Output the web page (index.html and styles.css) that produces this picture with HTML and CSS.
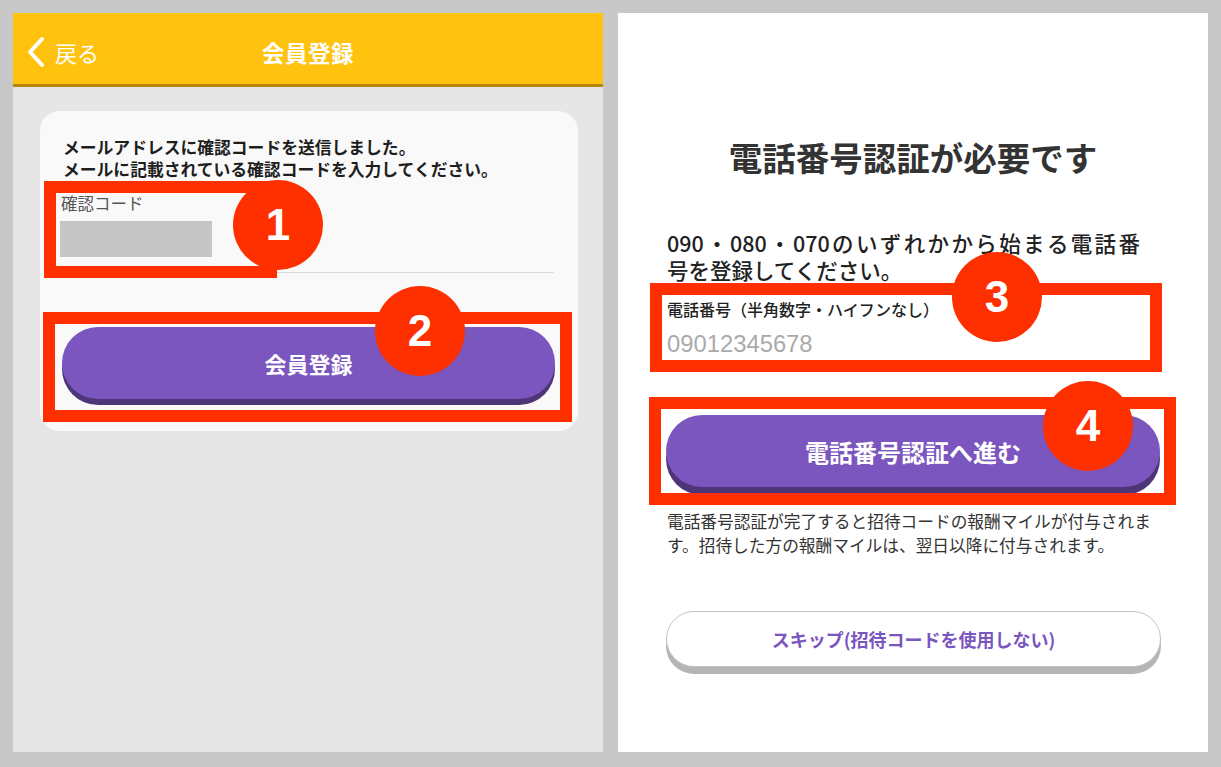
FILE: index.html
```html
<!DOCTYPE html>
<html lang="ja">
<head>
<meta charset="utf-8">
<title>会員登録</title>
<link rel="stylesheet" href="styles.css">
</head>
<body>
<div class="screens">
  <section class="panel panel-left">
    <header class="appbar">
      <a class="back">
        <svg class="chev" width="20" height="32" viewBox="0 0 20 32"><polyline points="16,3 4,16 16,29" fill="none" stroke="#fff" stroke-width="4" stroke-linecap="round" stroke-linejoin="round"/></svg>
        <span>戻る</span>
      </a>
      <h1 class="appbar-title">会員登録</h1>
      <span></span>
    </header>
    <div class="left-body">
      <div class="card">
        <p class="card-msg">メールアドレスに確認コードを送信しました。<br>メールに記載されている確認コードを入力してください。</p>
        <div class="field">
          <label class="field-label">確認コード</label>
          <div class="code-box"></div>
        </div>
        <button class="btn-primary btn-left">会員登録</button>
      </div>
    </div>
    <div class="mark mark-box box1"></div>
    <div class="mark mark-circle c1">1</div>
    <div class="mark mark-box box2"></div>
    <div class="mark mark-circle c2">2</div>
  </section>

  <section class="panel panel-right">
    <h2 class="r-title">電話番号認証が必要です</h2>
    <p class="r-lead"><span class="lead-line">090・080・070のいずれかから始まる電話番</span>号を登録してください。</p>
    <label class="r-label">電話番号（半角数字・ハイフンなし）</label>
    <div class="r-input">09012345678</div>
    <button class="btn-primary btn-right">電話番号認証へ進む</button>
    <p class="r-note">電話番号認証が完了すると招待コードの報酬マイルが付与されま<br>す。招待した方の報酬マイルは、翌日以降に付与されます。</p>
    <button class="btn-skip">スキップ(招待コードを使用しない)</button>
    <div class="mark mark-box box3"></div>
    <div class="mark mark-circle c3">3</div>
    <div class="mark mark-box box4"></div>
    <div class="mark mark-circle c4">4</div>
  </section>
</div>
</body>
</html>
```

FILE: styles.css
```css
* { box-sizing: border-box; }
html, body { margin: 0; padding: 0; }
body {
  background: #c8c8c8;
  font-family: "Noto Sans CJK JP", "Noto Sans", sans-serif;
  width: 1221px;
  height: 767px;
  overflow: hidden;
}
.screens {
  display: flex;
  gap: 15px;
  padding: 13px;
}
.panel {
  position: relative;
  width: 590px;
  height: 739px;
  flex: none;
}
.panel-left {
  background: #e6e6e6;
  display: flex;
  flex-direction: column;
}
.appbar {
  height: 74px;
  background: #ffc20e;
  border-bottom: 3px solid #b8860b;
  display: grid;
  grid-template-columns: 1fr auto 1fr;
  align-items: center;
  padding: 6px 0 0 0;
  color: #fff;
}
.back {
  display: flex;
  align-items: center;
  gap: 9px;
  padding-left: 13px;
  font-size: 22px;
  line-height: 30px;
  color: #fff;
}
.chev { display: block; }
.appbar-title {
  margin: 0;
  font-size: 22.5px;
  font-weight: 700;
  line-height: 30px;
  letter-spacing: 0.5px;
}
.left-body {
  padding: 24px 25px 0 27px;
}
.card {
  background: #f9f9f9;
  border-radius: 20px;
  height: 320px;
  padding: 25px 24px 0 21px;
  display: flex;
  flex-direction: column;
}
.card-msg {
  margin: 0 0 0 2px;
  font-size: 16.8px;
  font-weight: 700;
  line-height: 22px;
  color: #1e1e1e;
  white-space: nowrap;
}
.field {
  margin-top: 13px;
  border-bottom: 1px solid #d8d8e0;
  padding-bottom: 15px;
  display: flex;
  flex-direction: column;
  gap: 8px;
}
.field-label {
  font-size: 16.5px;
  line-height: 20px;
  color: #555;
}
.code-box {
  width: 152px;
  height: 36px;
  background: #c6c6c6;
  margin-left: -1px;
}
.btn-primary {
  display: block;
  border: 0;
  border-radius: 40px;
  background: #7b56bf;
  color: #fff;
  font-family: inherit;
  font-weight: 700;
  text-align: center;
  padding: 0;
}
.btn-left {
  margin: 54px 0 0 1px;
  width: 493px;
  height: 72px;
  font-size: 22px;
  box-shadow: 0 6px 0 #4e3577;
}
.panel-right {
  background: #fff;
  padding: 124px 48px 0 48px;
}
.r-title {
  margin: 0;
  text-align: center;
  font-size: 33.5px;
  line-height: 40px;
  font-weight: 700;
  color: #333;
}
.r-lead {
  margin: 52px 0 0 1px;
  width: 473px;
  font-size: 21.5px;
  line-height: 27px;
  font-weight: 500;
  color: #222;
  white-space: nowrap;
}
.lead-line {
  display: block;
  text-align: justify;
  text-align-last: justify;
  text-justify: inter-character;
}
.r-label {
  display: block;
  margin: 15px 0 0 1px;
  font-size: 16px;
  line-height: 22px;
  font-weight: 500;
  color: #222;
}
.r-input {
  margin: 9px 0 0 1px;
  font-family: "Liberation Sans", Arial, sans-serif;
  font-size: 23.8px;
  line-height: 30px;
  color: #aaa;
}
.btn-right {
  margin-top: 56px;
  width: 494px;
  height: 72px;
  font-size: 24px;
  box-shadow: 0 8px 0 #4e3577;
}
.r-note {
  margin: 22px 0 0 1px;
  font-size: 16.7px;
  line-height: 24px;
  color: #333;
  white-space: nowrap;
}
.btn-skip {
  display: block;
  margin-top: 54px;
  width: 495px;
  height: 56px;
  border: 1px solid #c2c2c2;
  border-radius: 30px;
  background: #fff;
  box-shadow: 0 7px 0 #b5b5b5;
  color: #7b56bf;
  font-family: inherit;
  font-size: 18px;
  font-weight: 700;
  padding: 0;
}

/* annotation overlays */
.mark { position: absolute; }
.mark-box {
  border: 12px solid #ff2f00;
}
.mark-circle {
  width: 90px;
  height: 90px;
  border-radius: 50%;
  background: #ff3000;
  color: #fff;
  font-family: "Liberation Sans", Arial, sans-serif;
  font-weight: 700;
  font-size: 44px;
  line-height: 90px;
  text-align: center;
}
.box1 { left: 31px; top: 168px; width: 233px; height: 97px; }
.c1 { left: 220px; top: 167px; }
.box2 { left: 30px; top: 299px; width: 529px; height: 110px; }
.c2 { left: 362px; top: 273px; }
.box3 { left: 32px; top: 270px; width: 512px; height: 89px; }
.c3 { left: 334px; top: 239px; }
.box4 { left: 31px; top: 384px; width: 527px; height: 108px; }
.c4 { left: 425px; top: 368px; }
```
